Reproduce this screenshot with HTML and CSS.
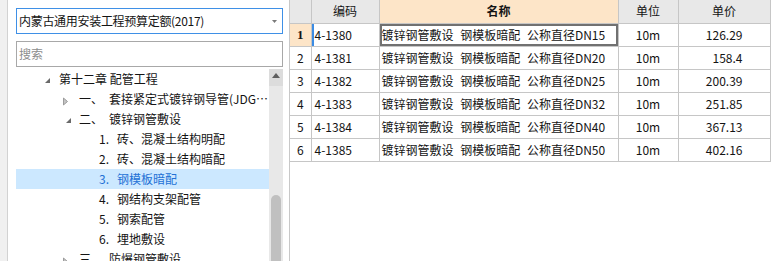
FILE: index.html
```html
<!DOCTYPE html>
<html lang="zh">
<head>
<meta charset="utf-8">
<title>定额</title>
<link rel="stylesheet" href="styles.css">
</head>
<body>
<div class="app">
  <div class="strip"></div>
  <aside class="left">
    <div class="select">
      <span class="select-text">内蒙古通用安装工程预算定额(2017)</span>
      <svg class="caret" width="5" height="3" viewBox="0 0 5 3"><polygon points="0,0 5,0 2.5,3" fill="#7a7a7a"/></svg>
    </div>
    <div class="search">搜索</div>
    <div class="treewrap">
      <ul class="tree">
        <li class="l0"><span class="tw"><svg width="16" height="20"><polygon points="10,9 10,14 5,14" fill="#6a6a6a"/></svg></span><span class="label">第十二章 配管工程</span></li>
        <li class="l1"><span class="tw"><svg width="16" height="20"><polygon points="3.5,9 7.5,12.5 3.5,16" fill="#c4c4c4" stroke="#8c8c8c" stroke-width="0.8"/></svg></span><span class="label"><span class="n1">一、</span>套接紧定式镀锌钢导管(JDG…</span></li>
        <li class="l1"><span class="tw"><svg width="16" height="20"><polygon points="11,9 11,14 6,14" fill="#6a6a6a"/></svg></span><span class="label"><span class="n1">二、</span>镀锌钢管敷设</span></li>
        <li class="l2"><span class="tw"></span><span class="label"><span class="n2">1.</span>砖、混凝土结构明配</span></li>
        <li class="l2"><span class="tw"></span><span class="label"><span class="n2">2.</span>砖、混凝土结构暗配</span></li>
        <li class="l2 sel"><span class="tw"></span><span class="label"><span class="n2">3.</span>钢模板暗配</span></li>
        <li class="l2"><span class="tw"></span><span class="label"><span class="n2">4.</span>钢结构支架配管</span></li>
        <li class="l2"><span class="tw"></span><span class="label"><span class="n2">5.</span>钢索配管</span></li>
        <li class="l2"><span class="tw"></span><span class="label"><span class="n2">6.</span>埋地敷设</span></li>
        <li class="l1"><span class="tw"><svg width="16" height="20"><polygon points="3.5,9 7.5,12.5 3.5,16" fill="#c4c4c4" stroke="#8c8c8c" stroke-width="0.8"/></svg></span><span class="label"><span class="n1">三、</span>防爆钢管敷设</span></li>
      </ul>
      <div class="vscroll">
        <div class="sb-up"><svg width="8" height="5" viewBox="0 0 8 5"><polygon points="0,5 8,5 4,0" fill="#5f5f5f"/></svg></div>
        <div class="sb-track"><div class="sb-thumb"></div></div>
      </div>
    </div>
  </aside>
  <main class="right">
    <table class="grid">
      <colgroup>
        <col class="c-no"><col class="c-code"><col class="c-name"><col class="c-unit"><col class="c-price">
      </colgroup>
      <thead>
        <tr><th class="no"></th><th>编码</th><th class="hl">名称</th><th>单位</th><th>单价</th></tr>
      </thead>
      <tbody>
        <tr class="cur"><td class="no">1</td><td class="code">4-1380</td><td class="name">镀锌钢管敷设 钢模板暗配 公称直径DN15</td><td class="unit">10m</td><td class="price">126.29</td></tr>
        <tr><td class="no">2</td><td class="code">4-1381</td><td class="name">镀锌钢管敷设 钢模板暗配 公称直径DN20</td><td class="unit">10m</td><td class="price">158.4</td></tr>
        <tr><td class="no">3</td><td class="code">4-1382</td><td class="name">镀锌钢管敷设 钢模板暗配 公称直径DN25</td><td class="unit">10m</td><td class="price">200.39</td></tr>
        <tr><td class="no">4</td><td class="code">4-1383</td><td class="name">镀锌钢管敷设 钢模板暗配 公称直径DN32</td><td class="unit">10m</td><td class="price">251.85</td></tr>
        <tr><td class="no">5</td><td class="code">4-1384</td><td class="name">镀锌钢管敷设 钢模板暗配 公称直径DN40</td><td class="unit">10m</td><td class="price">367.13</td></tr>
        <tr><td class="no">6</td><td class="code">4-1385</td><td class="name">镀锌钢管敷设 钢模板暗配 公称直径DN50</td><td class="unit">10m</td><td class="price">402.16</td></tr>
      </tbody>
    </table>
  </main>
</div>
</body>
</html>
```

FILE: styles.css
```css
* { box-sizing: border-box; }
html, body { margin: 0; padding: 0; }
body {
  font-family: "Noto Sans CJK SC", "Noto Sans", sans-serif;
  font-size: 12px;
  color: #141414;
  background: #fff;
  overflow: hidden;
}
.app { display: flex; height: 261px; }
.strip {
  width: 8px;
  flex-shrink: 0;
  background: #f0f0f0;
  border-right: 1px solid #d2d2d2;
}
.left {
  width: 281px;
  flex-shrink: 0;
  padding: 8px 6px 0 8px;
  display: flex;
  flex-direction: column;
}
.select {
  height: 26px;
  border: 1px solid #3f90e6;
  display: flex;
  align-items: center;
  justify-content: space-between;
  padding: 0 5px 0 2px;
  flex-shrink: 0;
}
.select-text { letter-spacing: -0.3px; line-height: 14px; }
.caret { display: block; }
.search {
  margin-top: 7px;
  height: 26px;
  border: 1px solid #a8a8a8;
  padding-left: 2px;
  color: #8d8d8d;
  display: flex;
  align-items: center;
  flex-shrink: 0;
  line-height: 14px;
}
.treewrap {
  margin-top: 2px;
  flex: 1;
  display: flex;
  min-height: 0;
  overflow: hidden;
}
.tree {
  flex: 1;
  list-style: none;
  margin: 0;
  padding: 0;
  min-width: 0;
}
.tree li {
  height: 20px;
  display: flex;
  align-items: center;
  white-space: nowrap;
  overflow: hidden;
  line-height: 14px;
}
.tree .l0 { padding-left: 24px; }
.tree .l1 { padding-left: 44px; }
.tree .l2 { padding-left: 64px; }
.tree .sel { background: #cce8ff; color: #2271d6; }
.tw { width: 16px; height: 20px; flex-shrink: 0; display: block; }
.tw svg { display: block; }
.label { margin-left: 3px; display: flex; }
.n1 { width: 30px; flex-shrink: 0; }
.n2 { width: 18px; flex-shrink: 0; }
.vscroll {
  width: 14px;
  flex-shrink: 0;
  display: flex;
  flex-direction: column;
  background: #e8e8e8;
}
.sb-up {
  height: 17px;
  background: #dcdcdc;
  display: flex;
  justify-content: center;
  padding-top: 4px;
  flex-shrink: 0;
}
.sb-up svg { display: block; }
.sb-track { flex: 1; padding: 109px 2px 0 2px; }
.sb-thumb {
  height: 100%;
  background: #c0c0c0;
  border-radius: 5px 5px 0 0;
}
.right {
  flex: 1;
  border-left: 1px solid #c8c8c8;
  background: #fff;
}
.grid {
  border-collapse: collapse;
  table-layout: fixed;
  width: 480px;
}
.c-no { width: 21px; }
.c-code { width: 68px; }
.c-name { width: 239px; }
.c-unit { width: 60px; }
.c-price { width: 92px; }
.grid th, .grid td {
  border: 1px solid #c6c6c6;
  height: 23px;
  padding: 0;
  white-space: nowrap;
  overflow: hidden;
  line-height: 14px;
}
.grid tr > :first-child { border-left: none; }
.grid thead th { border-top: none; }
.grid th {
  background: #e8e8e8;
  font-weight: normal;
  text-align: center;
}
.grid th.hl { background: #fde5c8; font-weight: bold; }
.grid td.no { text-align: center; }
.grid .cur td.no { background: #fde5c8; font-weight: bold; font-family: "Liberation Serif", serif; font-size: 13px; }
.grid td.code { padding-left: 3px; }
.grid .cur td.code { box-shadow: inset 2px 0 0 #3c8ce4; }
.grid td.name { padding-left: 2px; word-spacing: 4px; }
.grid .cur td.name { box-shadow: inset 0 0 0 2px #717171; }
.grid td.unit { text-align: center; }
.grid td.price { text-align: right; padding-right: 27px; }
```
